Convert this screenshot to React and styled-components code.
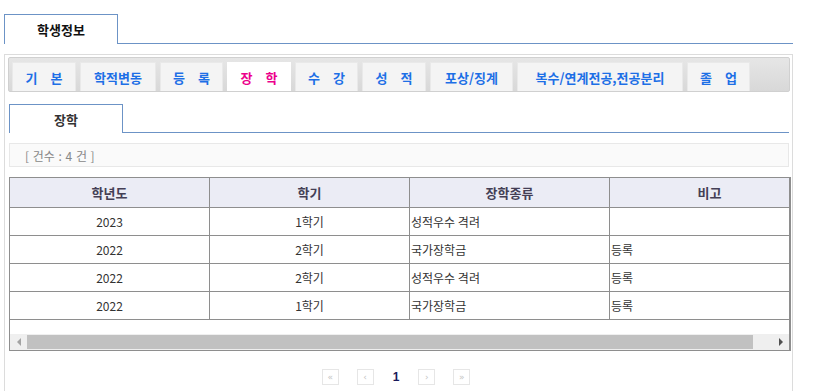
import React from 'react';
import styled, { createGlobalStyle } from 'styled-components';

const GlobalStyle = createGlobalStyle`
  html, body {
    margin: 0;
    padding: 0;
    background: #fff;
    font-family: "Noto Sans CJK KR", "Noto Sans", sans-serif;
    overflow: hidden;
  }
`;

const Page = styled.div`
  padding: 14px 26px 0 4px;
  width: 789px;
`;

const TopTabBar = styled.div`
  display: flex;
  border-bottom: 1px solid #6c93c6;
  height: 29px;
`;

const TopTab = styled.div`
  width: 114px;
  height: 30px;
  box-sizing: border-box;
  border: 1px solid #6c93c6;
  border-bottom: none;
  background: #fff;
  display: flex;
  align-items: center;
  justify-content: center;
  font-size: 13px;
  font-weight: 700;
  color: #111;
  margin-bottom: -1px;
`;

const Panel = styled.div`
  margin-top: 10px;
  border: 1px solid #dcdcdc;
  border-bottom: none;
  padding: 2px 2px 0 3px;
  height: 340px;
`;

const MenuStrip = styled.div`
  display: flex;
  gap: 4px;
  padding: 4px 0 0 3px;
  height: 35px;
  box-sizing: border-box;
  background: linear-gradient(#e6e6e6, #d8d8d8);
  border: 1px solid #d0d0d0;
  border-radius: 2px;
`;

const MenuTab = styled.div`
  width: ${p => p.$w}px;
  height: 29px;
  box-sizing: border-box;
  background: ${p => (p.$active ? '#fff' : '#f4f4f4')};
  border: 1px solid ${p => (p.$active ? '#fff' : '#e9e9e9')};
  border-bottom: none;
  display: flex;
  align-items: center;
  justify-content: center;
  font-size: 13px;
  font-weight: 700;
  color: ${p => (p.$active ? '#ec008c' : '#1d6fe6')};
  word-spacing: ${p => (p.$spaced ? '10px' : '0')};
  white-space: pre;
`;

const Content = styled.div`
  padding: 12px 0 0 1px;
`;

const SubTabBar = styled.div`
  display: flex;
  border-bottom: 1px solid #6c93c6;
  height: 28px;
  width: 780px;
`;

const SubTab = styled.div`
  width: 114px;
  height: 29px;
  box-sizing: border-box;
  border: 1px solid #6c93c6;
  border-bottom: none;
  background: #fff;
  display: flex;
  align-items: center;
  justify-content: center;
  font-size: 13px;
  font-weight: 700;
  color: #333;
`;

const CountBox = styled.div`
  margin-top: 10px;
  width: 780px;
  height: 24px;
  box-sizing: border-box;
  background: #fafafa;
  border: 1px solid #e8e8e8;
  display: flex;
  align-items: center;
  padding-left: 15px;
  font-size: 12px;
  color: #888;
  word-spacing: 1px;
`;

const GridWrap = styled.div`
  margin-top: 10px;
  width: 782px;
  box-sizing: border-box;
  border: 1px solid #8e8e8e;
  border-right: 2px solid #8e8e8e;
  overflow: hidden;
`;

const Table = styled.div`
  display: grid;
  grid-template-columns: 200px 200px 200px 200px;
  width: 800px;
`;

const HeadCell = styled.div`
  height: 29px;
  background: #ebecf5;
  border-right: 1px solid #8e8e8e;
  border-bottom: 1px solid #8e8e8e;
  display: flex;
  align-items: center;
  justify-content: center;
  font-size: 13px;
  font-weight: 700;
  color: #443f55;
`;

const Cell = styled.div`
  height: 27px;
  border-right: 1px solid #8e8e8e;
  border-bottom: 1px solid #8e8e8e;
  display: flex;
  align-items: center;
  justify-content: ${p => (p.$left ? 'flex-start' : 'center')};
  padding-left: ${p => (p.$left ? '1px' : '0')};
  font-size: 12px;
  color: #333;
`;

const Spacer = styled.div`
  height: 14px;
`;

const ScrollBar = styled.div`
  display: flex;
  align-items: center;
  height: 16px;
  background: #efefef;
`;

const ScrollArrow = styled.div`
  width: 17px;
  height: 16px;
  display: flex;
  align-items: center;
  justify-content: center;
`;

const Arrow = styled.div`
  width: 0;
  height: 0;
  border-top: 4px solid transparent;
  border-bottom: 4px solid transparent;
  ${p => (p.$dir === 'left'
    ? 'border-right: 4px solid #a3a3a3;'
    : 'border-left: 4px solid #505050;')}
`;

const Thumb = styled.div`
  flex: 1;
  height: 14px;
  background: #c1c1c1;
  margin-right: 19px;
`;

const Pager = styled.div`
  display: flex;
  align-items: center;
  justify-content: center;
  gap: 18px;
  margin-top: 18px;
  width: 774px;
  box-sizing: border-box;
`;

const PageBtn = styled.div`
  width: 17px;
  height: 16px;
  box-sizing: border-box;
  border: 1px solid #e6e6e6;
  display: flex;
  align-items: center;
  justify-content: center;
  font-family: "DejaVu Sans", sans-serif;
  font-size: 9px;
  color: #c4c4c4;
`;

const PageNum = styled.div`
  font-family: "Liberation Sans", sans-serif;
  font-size: 12px;
  font-weight: 700;
  color: #1a1a5a;
  padding: 0 1px;
`;

const menus = [
  { label: '기 본', w: 64, spaced: true },
  { label: '학적변동', w: 76 },
  { label: '등 록', w: 63, spaced: true },
  { label: '장 학', w: 64, spaced: true, active: true },
  { label: '수 강', w: 63, spaced: true },
  { label: '성 적', w: 64, spaced: true },
  { label: '포상/징계', w: 83 },
  { label: '복수/연계전공,전공분리', w: 166 },
  { label: '졸 업', w: 63, spaced: true },
];

const rows = [
  ['2023', '1학기', '성적우수 격려', ''],
  ['2022', '2학기', '국가장학금', '등록'],
  ['2022', '2학기', '성적우수 격려', '등록'],
  ['2022', '1학기', '국가장학금', '등록'],
];

export default function App() {
  return (
    <>
      <GlobalStyle />
      <Page>
        <TopTabBar>
          <TopTab>학생정보</TopTab>
        </TopTabBar>
        <Panel>
          <MenuStrip>
            {menus.map(m => (
              <MenuTab key={m.label} $w={m.w} $active={m.active} $spaced={m.spaced}>
                {m.label}
              </MenuTab>
            ))}
          </MenuStrip>
          <Content>
            <SubTabBar>
              <SubTab>장학</SubTab>
            </SubTabBar>
            <CountBox>[ 건수 : 4 건 ]</CountBox>
            <GridWrap>
              <Table>
                {['학년도', '학기', '장학종류', '비고'].map(h => (
                  <HeadCell key={h}>{h}</HeadCell>
                ))}
                {rows.map((r, i) =>
                  r.map((v, j) => (
                    <Cell key={`${i}-${j}`} $left={j >= 2}>{v}</Cell>
                  ))
                )}
              </Table>
              <Spacer />
              <ScrollBar>
                <ScrollArrow><Arrow $dir="left" /></ScrollArrow>
                <Thumb />
                <ScrollArrow><Arrow $dir="right" /></ScrollArrow>
              </ScrollBar>
            </GridWrap>
            <Pager>
              <PageBtn>«</PageBtn>
              <PageBtn>‹</PageBtn>
              <PageNum>1</PageNum>
              <PageBtn>›</PageBtn>
              <PageBtn>»</PageBtn>
            </Pager>
          </Content>
        </Panel>
      </Page>
    </>
  );
}
